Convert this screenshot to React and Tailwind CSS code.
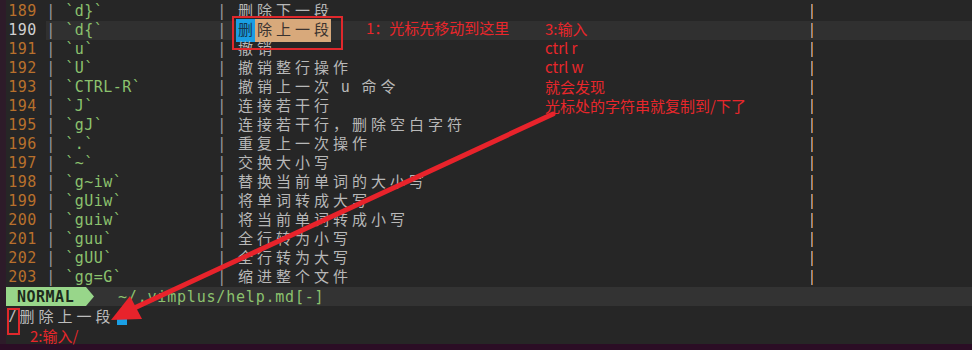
import React from 'react';

const rows = [
  [189, 'd}', '删除下一段'],
  [190, 'd{', '删除上一段'],
  [191, 'u', '撤销'],
  [192, 'U', '撤销整行操作'],
  [193, 'CTRL-R', '撤销上一次 u 命令'],
  [194, 'J', '连接若干行'],
  [195, 'gJ', '连接若干行，删除空白字符'],
  [196, '.', '重复上一次操作'],
  [197, '~', '交换大小写'],
  [198, 'g~iw', '替换当前单词的大小写'],
  [199, 'gUiw', '将单词转成大写'],
  [200, 'guiw', '将当前单词转成小写'],
  [201, 'guu', '全行转为小写'],
  [202, 'gUU', '全行转为大写'],
  [203, 'gg=G', '缩进整个文件'],
];

const isWide = (ch) => /[\u2e80-\u9fff\u3000-\u303f\uff00-\uffef]/.test(ch);

// one terminal cell per character, CJK takes two
const Cells = ({ text }) =>
  Array.from(text).map((ch, i) =>
    isWide(ch) ? (
      <span key={i} className="inline-block w-[19px] text-center font-['Noto_Sans_CJK_SC',sans-serif] text-[15px] leading-[18px]">
        {ch}
      </span>
    ) : (
      <span key={i} className="inline-block w-[9.5px] text-center leading-[18px]">
        {ch === ' ' ? '\u00a0' : ch}
      </span>
    )
  );

const Row = ({ num, code, desc }) => {
  const current = num === 190;
  return (
    <div className="flex h-[19px] items-center">
      <div className={`w-[38px] shrink-0 ${current ? 'text-[#d0d0d0]' : 'text-[#b8702c]'}`}>
        <Cells text={String(num) + ' '} />
      </div>
      <div className={`flex flex-1 h-full items-center ${current ? 'bg-[#303030]' : ''}`}>
        <div className="flex w-[765px] shrink-0 items-center">
          <span className="text-[#9a9a9a]"><Cells text="| " /></span>
          <span className="text-[#8cc26e]"><Cells text={('`' + code + '`').padEnd(16, ' ')} /></span>
          <span className="text-[#9a9a9a]"><Cells text="| " /></span>
          {current ? (
            <span className="flex items-center">
              <span className="bg-[#1a9fe4] text-[#15384f]"><Cells text="删" /></span>
              <span className="bg-[#d8a97b] text-[#3a3330]"><Cells text="除上一段" /></span>
            </span>
          ) : (
            <span className="text-[#b8b8b8]"><Cells text={desc} /></span>
          )}
        </div>
        <div className="flex h-[15px] shrink-0">
          <div className="w-px bg-[#7d8ea3]" />
          <div className="w-px bg-[#c0732c]" />
        </div>
      </div>
    </div>
  );
};

const App = () => {
  return (
    <div className="relative flex h-[350px] w-[972px] flex-col overflow-hidden bg-[#262626] font-['DejaVu_Sans_Mono',monospace] text-[15px]">
      <div className="flex flex-1">
        <div className="w-[6px] shrink-0 bg-[#2d1b29]" />
        <div className="flex flex-1 flex-col pt-[2px]">
          <div className="pl-[2px]">
            {rows.map(([num, code, desc]) => (
              <Row key={num} num={num} code={code} desc={desc} />
            ))}
          </div>

          {/* status line */}
          <div className="flex h-[19px] items-center bg-[#333333] leading-[18px]">
            <div className="flex h-full w-[80px] items-center bg-[#98d68a] pl-[11px] font-bold text-[#1d2a1c] tracking-[0.5px]">
              NORMAL
            </div>
            <svg width="8" height="19" viewBox="0 0 8 19" className="shrink-0">
              <polygon points="0,0 8,9.5 0,19" fill="#98d68a" />
            </svg>
            <span className="ml-[24px] text-[#8cc26e] tracking-[0.8px]">~/.vimplus/help.md[-]</span>
          </div>

          {/* command line */}
          <div className="flex h-[19px] items-center pl-[2px] text-[#bdbdbd]">
            <Cells text="/删除上一段" />
            <div className="ml-[4px] h-[8px] w-[10px] self-end bg-[#1aa0e6]" />
          </div>
          <div className="h-[19px]" />
        </div>
      </div>
      <div className="h-[6px] bg-[#2b0d25]" />

      {/* annotations drawn over the screenshot */}
      <div className="absolute left-[232px] top-[16px] h-[34px] w-[111px] border-2 border-[#e0282c]" />
      <div className="absolute left-[7px] top-[308px] h-[27px] w-[13px] border-2 border-[#e0282c]" />

      <div className="absolute left-[366px] top-[18px] font-['Noto_Sans_CJK_SC',sans-serif] text-[15px] leading-[19px] text-[#e8262b]">
        1：光标先移动到这里
      </div>
      <div className="absolute left-[545px] top-[19px] flex flex-col font-['Noto_Sans_CJK_SC',sans-serif] text-[15px] leading-[19.2px] text-[#e8262b]">
        <span>3:输入</span>
        <span>ctrl r</span>
        <span>ctrl w</span>
        <span>就会发现</span>
        <span>光标处的字符串就复制到/下了</span>
      </div>
      <div className="absolute left-[30px] top-[326px] font-['Noto_Sans_CJK_SC',sans-serif] text-[15px] leading-[19px] text-[#e8262b]">
        2:输入/
      </div>

      <svg className="pointer-events-none absolute inset-0" width="972" height="350">
        <line x1="553" y1="114" x2="130" y2="310" stroke="#e8232b" strokeWidth="5" strokeLinecap="round" />
        <polygon points="111,320 130,296 142,319" fill="#e8232b" />
      </svg>
    </div>
  );
};

export default App;
